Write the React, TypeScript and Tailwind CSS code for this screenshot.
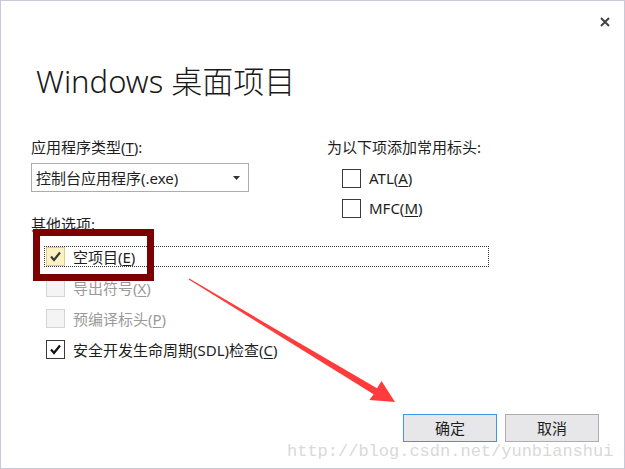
import React from "react";

type Row = {
  label: string;
  key: string;
  suffix: string;
  checked?: boolean;
  disabled?: boolean;
  focused?: boolean;
};

const rows: Row[] = [
  { label: "空项目(", key: "E", suffix: ")", checked: true, focused: true },
  { label: "导出符号(", key: "X", suffix: ")", disabled: true },
  { label: "预编译标头(", key: "P", suffix: ")", disabled: true },
  { label: "安全开发生命周期(SDL)检查(", key: "C", suffix: ")", checked: true },
];

function Check({ color }: { color: string }) {
  return (
    <svg width="13" height="13" viewBox="0 0 13 13">
      <path d="M2 6.5 L5 10 L11 2.5" fill="none" stroke={color} strokeWidth="2.2" />
    </svg>
  );
}

function Box({ checked, disabled, focused }: { checked?: boolean; disabled?: boolean; focused?: boolean }) {
  const cls = focused
    ? "border-[#e2cd86] bg-[#fcf1c2]"
    : disabled
    ? "border-[#d4d4d4] bg-[#f4f4f4]"
    : "border-[#3a3a3a] bg-white";
  return (
    <span className={`flex h-[19px] w-[19px] shrink-0 items-center justify-center border ${cls}`}>
      {checked && <Check color={focused ? "#3a3a3a" : "#111"} />}
    </span>
  );
}

function Label({ text, k, s }: { text: string; k: string; s: string }) {
  return (
    <span>
      {text}
      <span className="underline underline-offset-2">{k}</span>
      {s}
    </span>
  );
}

export default function App() {
  return (
    <div className="relative flex h-[469px] w-[625px] flex-col overflow-hidden border border-[#c9cad9] bg-white pl-[30px] text-[15px] leading-[20px] text-[#1e1e1e] font-['Segoe_UI','Noto_Sans','Noto_Sans_CJK_SC',sans-serif]">
      {/* close */}
      <div className="flex h-[42px] items-center justify-end pr-[14px]">
        <svg width="10" height="10" viewBox="0 0 10 10">
          <path d="M1 1 L9 9 M9 1 L1 9" stroke="#444" strokeWidth="2" />
        </svg>
      </div>

      <h1 className="ml-[5px] mt-[18px] h-[40px] text-[31px] font-light leading-[40px] text-[#1a1a1a]">
        Windows 桌面项目
      </h1>

      {/* top section */}
      <div className="mt-[36px] flex">
        <div className="flex w-[296px] flex-col">
          <Label text="应用程序类型(" k="T" s="):" />
          <div className="mt-[6px] flex h-[29px] w-[218px] items-center justify-between border border-[#abadb3] pl-[4px] pr-[8px]">
            <span>控制台应用程序(.exe)</span>
            <svg width="7" height="4" viewBox="0 0 7 4">
              <path d="M0 0 H7 L3.5 4 Z" fill="#333" />
            </svg>
          </div>
          <span className="mt-[22px]">其他选项:</span>
        </div>
        <div className="flex flex-col">
          <span>为以下项添加常用标头:</span>
          <div className="mt-[11px] flex flex-col gap-[10px] pl-[15px]">
            <div className="flex h-[20px] items-center gap-[8px]">
              <Box />
              <Label text="ATL(" k="A" s=")" />
            </div>
            <div className="flex h-[20px] items-center gap-[8px]">
              <Box />
              <Label text="MFC(" k="M" s=")" />
            </div>
          </div>
        </div>
      </div>

      {/* option rows */}
      <div className="mt-[12px] flex flex-col gap-[10px] pl-[13px]">
        {rows.map((r, i) => (
          <div
            key={i}
            className={`flex h-[21px] w-[445px] items-center gap-[8px] border pl-[1px] ${
              r.focused ? "border-dotted border-[#333]" : "border-transparent"
            } ${r.disabled ? "text-[#9a9a9a]" : ""}`}
          >
            <Box checked={r.checked} disabled={r.disabled} focused={r.focused} />
            <Label text={r.label} k={r.key} s={r.suffix} />
          </div>
        ))}
      </div>

      {/* buttons */}
      <div className="mt-auto flex justify-end gap-[8px] pb-[26px] pr-[25px]">
        <button className="h-[28px] w-[94px] border border-[#3d95ec] bg-[#e7e7ea] text-[15px]">确定</button>
        <button className="h-[28px] w-[94px] border border-[#adadad] bg-[#e7e7ea] text-[15px]">取消</button>
      </div>

      {/* annotation: red box */}
      <div className="pointer-events-none absolute left-[32px] top-[228px] h-[52px] w-[121px] border-[7px] border-[#7d0000]" />

      {/* annotation: arrow */}
      <svg className="pointer-events-none absolute left-0 top-0" width="625" height="469">
        <polygon
          points="187.7,278.4 372.6,393.3 368.4,399 394,401 380.5,380 376,387.2 188.3,277.6"
          fill="#ff3b3b"
        />
      </svg>

      {/* watermark */}
      <span className="pointer-events-none absolute left-[286px] top-[441px] text-[17px] leading-[20px] text-[#d9d9d9] font-['Liberation_Mono',monospace]">
        http://blog.csdn.net/yunbianshui
      </span>
    </div>
  );
}
